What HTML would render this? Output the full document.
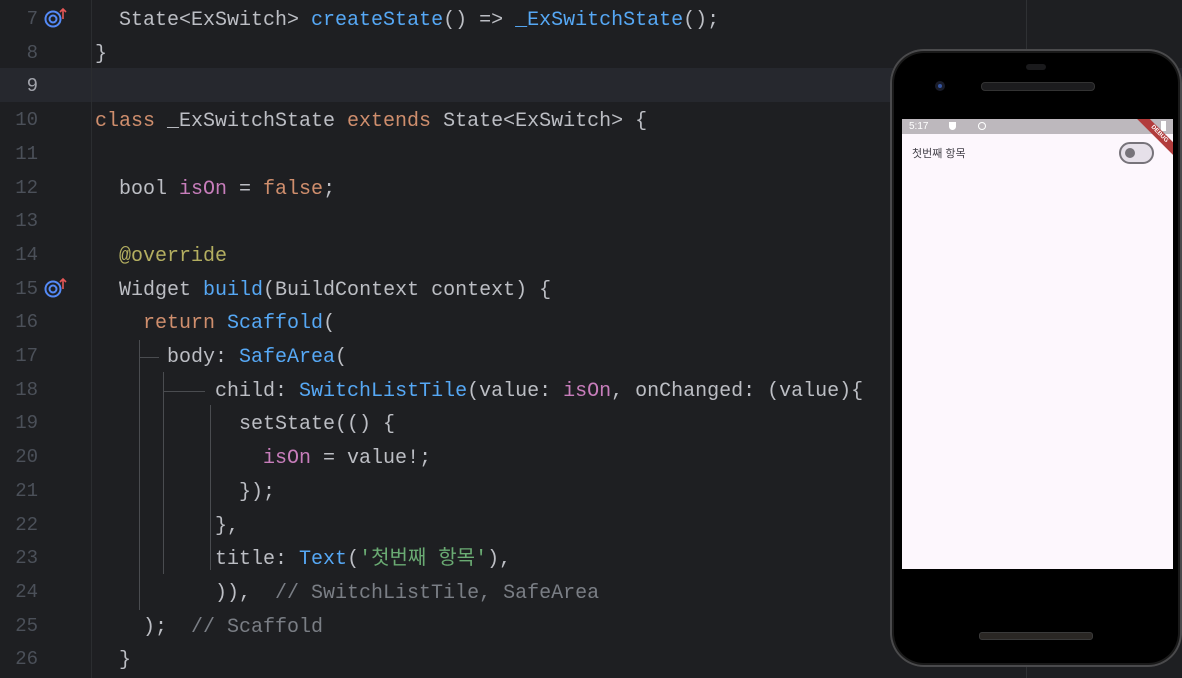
<!DOCTYPE html>
<html><head><meta charset="utf-8"><style>
body{margin:0;width:1182px;height:678px;background:#1e1f22;overflow:hidden;position:relative;font-family:"Liberation Mono","Noto Sans CJK KR",monospace;}
.hl{position:absolute;left:0;top:68px;width:1182px;height:34px;background:#26282e}
.gut{position:absolute;left:91px;top:0;width:1px;height:678px;background:#2b2d30}
.mar{position:absolute;left:1026px;top:0;width:1px;height:678px;background:#2f3134}
.ln{position:absolute;left:0;width:38px;text-align:right;font-size:19px;color:#4b5059;line-height:33.7px}
.code{position:absolute;left:95px;top:4px;font-size:20px;line-height:33.7px;color:#bcbec4;white-space:pre}
.k{color:#cf8e6d}.f{color:#56a8f5}.p{color:#c77dbb}.s{color:#6aab73}.c{color:#7a7e85}.a{color:#b3ae60}
.g{position:absolute;background:#4a4c50}
.phone{position:absolute;left:890px;top:49px;width:292px;height:618px;border-radius:34px;background:#000;box-shadow:inset 0 0 0 2px #4a4a4c,inset 0 0 0 4px #1a1a1a}
.scr{position:absolute;left:902px;top:119px;width:271px;height:450px;background:#fdf7fd;overflow:hidden}
.sb{position:absolute;left:0;top:0;width:271px;height:15px;background:#bdb8bd;color:#fff;font:10px "Liberation Sans",sans-serif;line-height:15px}
</style></head><body>
<div class="hl"></div><div class="gut"></div><div class="mar"></div>
<div class="ln" style="top:3px">7</div>
<div class="ln" style="top:36.7px">8</div>
<div class="ln" style="top:70.4px;color:#a1a3ab">9</div>
<div class="ln" style="top:104.1px">10</div>
<div class="ln" style="top:137.8px">11</div>
<div class="ln" style="top:171.5px">12</div>
<div class="ln" style="top:205.2px">13</div>
<div class="ln" style="top:238.9px">14</div>
<div class="ln" style="top:272.6px">15</div>
<div class="ln" style="top:306.3px">16</div>
<div class="ln" style="top:340px">17</div>
<div class="ln" style="top:373.7px">18</div>
<div class="ln" style="top:407.4px">19</div>
<div class="ln" style="top:441.1px">20</div>
<div class="ln" style="top:474.8px">21</div>
<div class="ln" style="top:508.5px">22</div>
<div class="ln" style="top:542.2px">23</div>
<div class="ln" style="top:575.9px">24</div>
<div class="ln" style="top:609.6px">25</div>
<div class="ln" style="top:643.3px">26</div>
<svg style="position:absolute;left:44px;top:7px" width="24" height="22"><circle cx="9" cy="12" r="7.5" fill="none" stroke="#548af7" stroke-width="2"/><circle cx="9" cy="12" r="3.5" fill="none" stroke="#548af7" stroke-width="2"/><path d="M19 12V2M16 5l3-3 3 3" fill="none" stroke="#e55757" stroke-width="1.6"/></svg>
<svg style="position:absolute;left:44px;top:277px" width="24" height="22"><circle cx="9" cy="12" r="7.5" fill="none" stroke="#548af7" stroke-width="2"/><circle cx="9" cy="12" r="3.5" fill="none" stroke="#548af7" stroke-width="2"/><path d="M19 12V2M16 5l3-3 3 3" fill="none" stroke="#e55757" stroke-width="1.6"/></svg>
<div class="g" style="left:139px;top:340px;width:1px;height:270px"></div>
<div class="g" style="left:139px;top:357px;width:20px;height:1px"></div>
<div class="g" style="left:163px;top:372px;width:1px;height:202px"></div>
<div class="g" style="left:163px;top:391px;width:42px;height:1px"></div>
<div class="g" style="left:210px;top:405px;width:1px;height:165px"></div>
<div class="code">  State&lt;ExSwitch&gt; <span class="f">createState</span>() =&gt; <span class="f">_ExSwitchState</span>();
}

<span class="k">class</span> _ExSwitchState <span class="k">extends</span> State&lt;ExSwitch&gt; {

  bool <span class="p">isOn</span> = <span class="k">false</span>;

  <span class="a">@override</span>
  Widget <span class="f">build</span>(BuildContext context) {
    <span class="k">return</span> <span class="f">Scaffold</span>(
      body: <span class="f">SafeArea</span>(
          child: <span class="f">SwitchListTile</span>(value: <span class="p">isOn</span>, onChanged: (value){
            setState(() {
              <span class="p">isOn</span> = value!;
            });
          },
          title: <span class="f">Text</span>(<span class="s">'첫번째 항목'</span>),
          )),  <span class="c">// SwitchListTile, SafeArea</span>
    );  <span class="c">// Scaffold</span>
  }</div>
<div class="phone"></div>
<div style="position:absolute;left:1026px;top:64px;width:20px;height:6px;border-radius:3px;background:#1a1a1c"></div>
<div style="position:absolute;left:981px;top:82px;width:112px;height:7px;border-radius:4px;background:#1c1c1e;border:1px solid #333"></div>
<div style="position:absolute;left:935px;top:81px;width:10px;height:10px;border-radius:5px;background:#1a1d2a"><div style="margin:3px;width:4px;height:4px;border-radius:2px;background:#3454a0"></div></div>
<div style="position:absolute;left:979px;top:632px;width:112px;height:6px;border-radius:3px;background:#2a2724;border:1px solid #3a3a3a"></div>
<div class="scr">
<div class="sb"><span style="position:absolute;left:7px">5:17</span><span style="position:absolute;left:47px;top:3px;width:7px;height:8px;background:#fff;border-radius:0 0 4px 4px"></span><span style="position:absolute;left:76px;top:3px;width:6px;height:6px;border:1.5px solid #fff;border-radius:50%"></span><span style="position:absolute;left:259px;top:2px;width:5px;height:10px;background:#fff"></span></div>
<div style="position:absolute;left:225px;top:11px;width:64px;height:9px;background:#b23c3c;transform:rotate(45deg);color:#fff;font:bold 6px 'Liberation Sans',sans-serif;text-align:center;line-height:9px">DEBUG</div>
<div style="position:absolute;left:10px;top:26px;font:11px 'Liberation Sans','Noto Sans CJK KR',sans-serif;color:#45424a">첫번째 항목</div>
<div style="position:absolute;left:217px;top:23px;width:31px;height:18px;border:2px solid #77737a;border-radius:11px;background:#e6e0e9"><div style="position:absolute;left:4px;top:4px;width:10px;height:10px;border-radius:5px;background:#77737a"></div></div>
</div>
</body></html>
